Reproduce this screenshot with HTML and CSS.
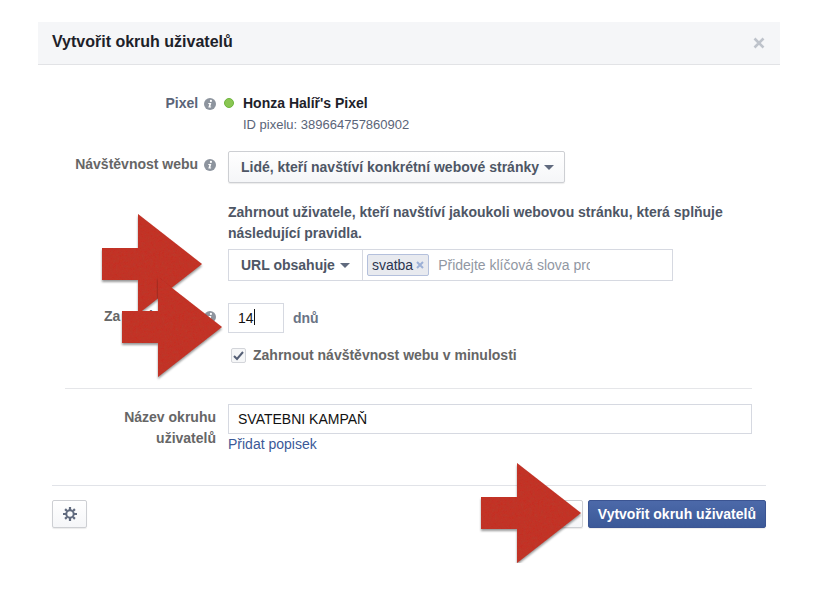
FILE: index.html
```html
<!DOCTYPE html>
<html lang="cs">
<head>
  <meta charset="UTF-8">
  <meta name="viewport" content="width=device-width, initial-scale=1.0">
  <title>Vytvořit okruh uživatelů</title>
  <link rel="stylesheet" href="styles.css">
</head>
<body>

  <!-- shared shapes -->
  <svg class="defs" width="0" height="0" aria-hidden="true">
    <defs>
      <filter id="paper" x="-10%" y="-10%" width="120%" height="120%">
        <feTurbulence type="fractalNoise" baseFrequency="0.35" numOctaves="3" seed="4" result="noise" />
        <feColorMatrix in="noise" type="matrix" values="0 0 0 0 0.45  0 0 0 0 0.05  0 0 0 0 0.03  0.9 0 0 0 -0.3" result="grain" />
        <feComposite in="grain" in2="SourceGraphic" operator="in" result="cut" />
        <feMerge>
          <feMergeNode in="SourceGraphic" />
          <feMergeNode in="cut" />
        </feMerge>
      </filter>
      <symbol id="arrow" viewBox="0 0 100 100" overflow="visible">
        <path d="M0 34H36V0L100 50L36 100V66H0Z" fill="#c43228" filter="url(#paper)" />
      </symbol>
      <symbol id="info" viewBox="0 0 12 12">
        <circle cx="6" cy="6" r="6" fill="#8d949e" />
        <circle cx="6.9" cy="2.9" r="1.1" fill="#fff" />
        <path d="M4.4 5H7.3L6.3 8.6H7.2L7 9.6H4.3L5.3 6H4.2Z" fill="#fff" />
      </symbol>
    </defs>
  </svg>

  <form class="dialog">
    <header class="dialog-header">
      <h1>Vytvořit okruh uživatelů</h1>
      <button type="button" class="close-btn" aria-label="Zavřít">
        <svg width="12" height="12" viewBox="0 0 12 12"><path d="M1.5 1.5L10.5 10.5M10.5 1.5L1.5 10.5" stroke="#bec3cb" stroke-width="2.6" /></svg>
      </button>
    </header>

    <div class="dialog-body">
      <div class="row">
        <div class="label label-pixel">Pixel <svg class="info"><use href="#info" /></svg></div>
        <div class="field pixel">
          <span class="status"></span>
          <div>
            <div class="pixel-name">Honza Halíř's Pixel</div>
            <div class="pixel-id">ID pixelu: 389664757860902</div>
          </div>
        </div>
      </div>

      <div class="row row-traffic">
        <div class="label">Návštěvnost webu <svg class="info"><use href="#info" /></svg></div>
        <div class="field">
          <button type="button" class="btn btn-select">Lidé, kteří navštíví konkrétní webové stránky <span class="caret"></span></button>
          <p class="rule-text">Zahrnout uživatele, kteří navštíví jakoukoli webovou stránku, která splňuje následující pravidla.</p>
          <div class="rule">
            <button type="button" class="rule-type">URL obsahuje <span class="caret"></span></button>
            <div class="tokens">
              <span class="token">svatba
                <button type="button" class="token-remove" aria-label="Odebrat">
                  <svg width="8" height="8" viewBox="0 0 8 8"><path d="M1 1L7 7M7 1L1 7" stroke="#9cb0d6" stroke-width="2" /></svg>
                </button>
              </span>
              <input type="text" class="token-input" aria-label="Klíčová slova" placeholder="Přidejte klíčová slova pro URL">
            </div>
            <svg class="arrow arrow-rule" aria-hidden="true"><use href="#arrow" /></svg>
          </div>
        </div>
      </div>

      <div class="row row-days">
        <label class="label" for="days">Za posledních <svg class="info"><use href="#info" /></svg></label>
        <div class="field">
          <div class="days">
            <input type="text" id="days" class="text-input days-input" value="14">
            <span class="days-unit">dnů</span>
            <svg class="arrow arrow-days" aria-hidden="true"><use href="#arrow" /></svg>
          </div>
          <label class="check"><input type="checkbox" checked> Zahrnout návštěvnost webu v minulosti</label>
        </div>
      </div>

      <hr class="divider">

      <div class="row">
        <label class="label" for="name">Název okruhu uživatelů</label>
        <div class="field">
          <input type="text" id="name" class="text-input name-input" value="SVATEBNI KAMPAŇ">
          <a href="#" class="link">Přidat popisek</a>
        </div>
      </div>
    </div>

    <footer class="dialog-footer">
      <button type="button" class="btn btn-gear" aria-label="Nastavení">
        <svg width="14" height="14" viewBox="-7 -7 14 14">
          <circle r="3.7" fill="none" stroke="#606a7e" stroke-width="2" />
          <path d="M0 -7V-4M0 7V4M-7 0H-4M7 0H4M-4.9 -4.9L-3 -3M4.9 4.9L3 3M-4.9 4.9L-3 3M4.9 -4.9L3 -3" stroke="#606a7e" stroke-width="2.2" />
        </svg>
      </button>
      <div class="actions">
        <button type="button" class="btn">Zrušit</button>
        <button type="submit" class="btn btn-primary">Vytvořit okruh uživatelů</button>
        <svg class="arrow arrow-submit" aria-hidden="true"><use href="#arrow" /></svg>
      </div>
    </footer>
  </form>

</body>
</html>
```

FILE: styles.css
```css
* { margin: 0; padding: 0; box-sizing: border-box; }
body {
  padding: 22px 44px 22px 38px;
  background: #fff;
  color: #4e5665;
  font-family: "Liberation Sans", Arial, sans-serif;
  font-size: 14px;
  line-height: 21px;
}
button, input { font: inherit; color: inherit; }
button { cursor: pointer; }
.defs { position: absolute; }

.dialog-header {
  display: flex;
  justify-content: space-between;
  align-items: center;
  height: 43px;
  padding: 0 14px;
  background: #f5f6f8;
  border-bottom: 1px solid #e2e3e6;
}
.dialog-header h1 { font-size: 16px; color: #1d2129; padding-bottom: 4px; }
.close-btn { display: flex; padding: 1px; border: none; background: none; }

.dialog-body { padding: 28px 28px 30px 27px; }
.row {
  display: grid;
  grid-template-columns: 151px 1fr;
  column-gap: 12px;
}
.row-traffic { margin-top: 16px; }
.row-days { margin-top: 22px; }
.label {
  padding-top: 3px;
  color: #666;
  font-weight: bold;
  text-align: right;
}
.label-pixel { padding-top: 0; color: #5a6478; }
.info { width: 12px; height: 12px; margin-left: 2px; vertical-align: -2px; }

.pixel { display: flex; gap: 9px; margin-left: -4px; }
.status {
  width: 10px;
  height: 10px;
  margin-top: 5px;
  border: 1px solid #6db63c;
  border-radius: 50%;
  background: #8ac653;
}
.pixel-name { font-weight: bold; color: #1d2129; }
.pixel-id { font-size: 13px; color: #5a6478; }

.btn {
  display: inline-flex;
  align-items: center;
  justify-content: center;
  height: 28px;
  padding: 0 9px;
  border: 1px solid #cdcfd3;
  border-radius: 2px;
  background: linear-gradient(#fff, #f5f6f8);
  box-shadow: 0 1px 1px rgba(0, 0, 0, 0.08);
  color: #4e5665;
  font-weight: bold;
  white-space: nowrap;
}
.btn-select { height: 32px; padding: 0 10px 0 12px; }
.caret {
  margin-left: 5px;
  border: 5px solid transparent;
  border-top-color: #606a7e;
  border-bottom: none;
}

.rule-text { margin: 19px 0 5px; font-weight: bold; }
.rule {
  position: relative;
  display: flex;
  width: 85%;
  height: 32px;
  border: 1px solid #d6d9e1;
}
.rule-type {
  display: flex;
  align-items: center;
  padding: 0 12px;
  border: none;
  border-right: 1px solid #d6d9e1;
  background: #fff;
  font-weight: bold;
  white-space: nowrap;
}
.tokens { display: flex; align-items: center; gap: 9px; padding-left: 4px; }
.token {
  display: flex;
  align-items: center;
  gap: 3px;
  height: 22px;
  padding: 0 4px;
  border: 1px solid #b4c0dc;
  border-radius: 2px;
  background: #e8eaef;
  color: #2b3550;
}
.token-remove { display: flex; border: none; background: none; }
.token-input { width: 152px; border: none; outline: none; background: none; }
.token-input::placeholder { color: #9197a3; opacity: 1; }

.text-input {
  height: 30px;
  padding: 0 9px;
  border: 1px solid #d6d9e1;
  background: #fff;
  color: #111;
}
.days { position: relative; display: flex; align-items: center; gap: 9px; }
.days-input { width: 56px; }
.days-unit { color: #6a7385; font-weight: bold; }
/* text cursor after the number */
.days::after {
  content: "";
  position: absolute;
  left: 26px;
  top: 6px;
  width: 1px;
  height: 16px;
  background: #111;
}
.check {
  display: flex;
  align-items: center;
  gap: 7px;
  margin-top: 12px;
  padding-left: 3px;
  color: #666;
  font-weight: bold;
}
.check input {
  appearance: none;
  width: 15px;
  height: 15px;
  border: 1px solid #d3d5da;
  border-radius: 2px;
  background: #f6f7f8 url("data:image/svg+xml,%3Csvg xmlns='http://www.w3.org/2000/svg' viewBox='0 0 13 13'%3E%3Cpath d='M2 7L5 10L11 3' fill='none' stroke='%23566076' stroke-width='2'/%3E%3C/svg%3E") center / 13px no-repeat;
}

.divider { margin: 22px 0 15px; border: none; border-top: 1px solid #e5e6e9; }
.name-input { display: block; width: 100%; }
.link { color: #3b5998; text-decoration: none; }

.dialog-footer {
  display: flex;
  justify-content: space-between;
  margin: 0 14px;
  padding: 14px 0 13px;
  border-top: 1px solid #e1e3e8;
}
.btn-gear { width: 35px; padding: 0; }
.actions { position: relative; display: flex; gap: 5px; }
.btn-primary {
  border-color: #3b5492;
  background: linear-gradient(#4c69a9, #3b5998);
  color: #fff;
}

/* red pointer arrows over the form */
.arrow {
  position: absolute;
  z-index: 1;
  width: 100px;
  height: 100px;
  overflow: visible;
  pointer-events: none;
  filter: drop-shadow(0 2px 1px rgba(0, 0, 0, 0.4));
}
.arrow-rule { left: -127px; top: -36px; }
.arrow-days { left: -106px; top: -26px; }
.arrow-submit { right: 185px; top: -37px; }
```
